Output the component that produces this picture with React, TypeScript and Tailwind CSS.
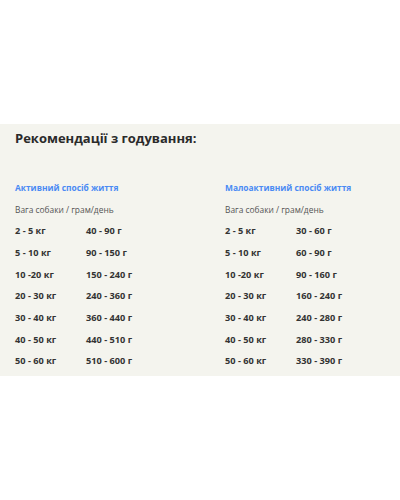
const active = [
  ['2 - 5 кг', '40 - 90 г'],
  ['5 - 10 кг', '90 - 150 г'],
  ['10 -20 кг', '150 - 240 г'],
  ['20 - 30 кг', '240 - 360 г'],
  ['30 - 40 кг', '360 - 440 г'],
  ['40 - 50 кг', '440 - 510 г'],
  ['50 - 60 кг', '510 - 600 г'],
]

const lowActive = [
  ['2 - 5 кг', '30 - 60 г'],
  ['5 - 10 кг', '60 - 90 г'],
  ['10 -20 кг', '90 - 160 г'],
  ['20 - 30 кг', '160 - 240 г'],
  ['30 - 40 кг', '240 - 280 г'],
  ['40 - 50 кг', '280 - 330 г'],
  ['50 - 60 кг', '330 - 390 г'],
]

function FeedColumn({ title, rows }: { title: string; rows: string[][] }) {
  return (
    <div className="w-[210px] shrink-0 pl-[15px]">
      <div className="h-[21.6px] leading-[21.6px] text-[8.4px] font-bold text-[#4a8af4]">{title}</div>
      <div className="h-[21.6px] leading-[21.6px] text-[8.4px] text-[#555]">Вага собаки / грам/день</div>
      {rows.map(([weight, grams]) => (
        <div key={weight} className="flex h-[21.7px] leading-[21.7px] text-[9.2px] font-bold text-[#333]">
          <span className="w-[71px]">{weight}</span>
          <span>{grams}</span>
        </div>
      ))}
    </div>
  )
}

export default function App() {
  return (
    <div className="w-[400px] h-[500px] bg-white overflow-hidden" style={{ fontFamily: '"Open Sans", sans-serif' }}>
      <div className="h-[124px]" />
      <div className="bg-[#f4f4ee] pt-[4px] pb-[4px]">
        <h2 className="pl-[15px] h-[20px] leading-[20px] text-[13px] font-bold text-[#2a2a2a]">
          Рекомендації з годування:
        </h2>
        <div className="flex mt-[29px]">
          <FeedColumn title="Активний спосіб життя" rows={active} />
          <FeedColumn title="Малоактивний спосіб життя" rows={lowActive} />
        </div>
      </div>
    </div>
  )
}
